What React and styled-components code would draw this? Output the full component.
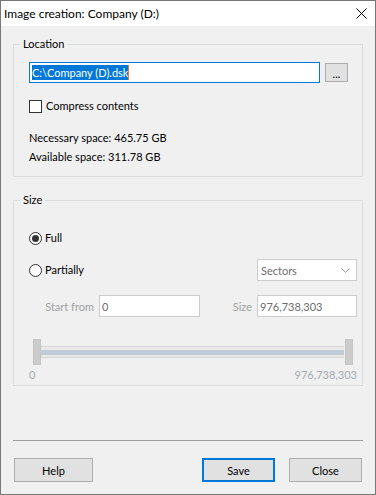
import React from 'react'
import styled, { createGlobalStyle } from 'styled-components'

const GlobalStyle = createGlobalStyle`
  html, body {
    margin: 0;
    padding: 0;
    background: #ffffff;
  }
  body {
    font-family: Lato, "Noto Sans", "Liberation Sans", sans-serif;
    font-size: 11px;
    color: #000000;
  }
  * {
    box-sizing: border-box;
  }
`

const Window = styled.div`
  width: 376px;
  height: 495px;
  border: 1px solid #777777;
  display: flex;
  flex-direction: column;
  background: #f0f0f0;
`

const TitleBar = styled.div`
  height: 25px;
  background: #ffffff;
  display: flex;
  align-items: center;
  justify-content: space-between;
  padding: 0 8px 0 3px;
`

const Title = styled.span`
  font-size: 12px;
  line-height: 16px;
`

const Body = styled.div`
  flex: 1;
  display: flex;
  flex-direction: column;
  padding: 0 12px 12px 12px;
`

const Group = styled.fieldset`
  margin: ${(p) => p.$top || 0}px 0 0 0;
  padding: 0 5px ${(p) => p.$bottom || 0}px 15px;
  min-width: 0;
  border: 1px solid #dcdcdc;
  border-radius: 0;
`

const Legend = styled.legend`
  margin-left: -9px;
  padding: 0 3px;
  line-height: 16px;
  font-size: 11px;
`

const PathRow = styled.div`
  display: flex;
  align-items: center;
  gap: 5px;
  margin-top: 10px;
`

const PathField = styled.div`
  width: 291px;
  height: 21px;
  border: 1px solid #0078d7;
  background: #ffffff;
  display: flex;
  align-items: center;
  padding-left: 2px;
`

const Selection = styled.span`
  background: #0078d7;
  color: #ffffff;
  line-height: 15px;
  border-right: 1px solid #f07820;
`

const SmallButton = styled.button`
  width: 23px;
  height: 19px;
  border: 1px solid #adadad;
  background: #e1e1e1;
  font-family: inherit;
  font-size: 11px;
  line-height: 12px;
  padding: 3px 0 0;
  color: #000000;
`

const CheckRow = styled.label`
  display: flex;
  align-items: center;
  gap: 4px;
  height: 16px;
  margin-top: 15px;
  line-height: 16px;
`

const Box = styled.span`
  width: 13px;
  height: 13px;
  border: 1px solid #333333;
  background: #ffffff;
`

const Info = styled.div`
  line-height: 19px;
  margin-top: ${(p) => p.$top || 0}px;
`

const RadioRow = styled.div`
  display: flex;
  align-items: center;
  justify-content: space-between;
  height: 22px;
  margin-top: ${(p) => p.$top || 0}px;
`

const Radio = styled.label`
  display: flex;
  align-items: center;
  gap: 3px;
  line-height: 16px;
  color: #000000;
`

const Circle = styled.span`
  width: 13px;
  height: 13px;
  border-radius: 50%;
  border: 1px solid #333333;
  background: #ffffff;
  display: flex;
  align-items: center;
  justify-content: center;

  &::after {
    content: '';
    width: 7px;
    height: 7px;
    border-radius: 50%;
    background: ${(p) => (p.$checked ? '#333333' : 'transparent')};
  }
`

const Select = styled.div`
  width: 100px;
  height: 22px;
  border: 1px solid #cccccc;
  background: #ffffff;
  color: #6d6d6d;
  display: flex;
  align-items: center;
  justify-content: space-between;
  padding: 0 6px 0 3px;
`

const RangeRow = styled.div`
  display: flex;
  align-items: center;
  justify-content: space-between;
  margin-top: 14px;
  height: 22px;
`

const Field = styled.div`
  display: flex;
  align-items: center;
  gap: 5px;
  padding-left: ${(p) => p.$indent || 0}px;
`

const FieldLabel = styled.span`
  color: #a0a0a0;
  white-space: nowrap;
  display: flex;
  justify-content: flex-end;
  flex-shrink: 0;
  width: ${(p) => (p.$w ? `${p.$w}px` : 'auto')};
`

const TextBox = styled.div`
  width: ${(p) => p.$w}px;
  height: 22px;
  border: 1px solid #cccccc;
  background: #ffffff;
  color: #6d6d6d;
  display: flex;
  align-items: center;
  padding-left: 2px;
`

const Slider = styled.div`
  display: flex;
  align-items: flex-start;
  margin: 22px 4px 0 4px;
  height: 26px;
`

const Thumb = styled.span`
  width: 8px;
  height: 26px;
  background: #cccccc;
  border: 1px solid #c4c4c4;
  flex-shrink: 0;
`

const Track = styled.div`
  flex: 1;
  height: 12px;
  margin: 7px 1px 0 0;
  border-top: 1px solid #d6d6d6;
  border-bottom: 1px solid #d6d6d6;
  background: #e9e9e9;
  padding-top: 3px;
`

const Band = styled.div`
  height: 5px;
  background: #c2ccd8;
`

const Scale = styled.div`
  display: flex;
  justify-content: space-between;
  color: #a5aab0;
  line-height: 16px;
  margin-top: 2px;
`

const Footer = styled.div`
  margin-top: auto;
`

const Separator = styled.div`
  height: 1px;
  background: #a0a0a0;
`

const Buttons = styled.div`
  display: flex;
  align-items: center;
  margin-top: 17px;
  padding-left: 1px;
`

const Button = styled.button`
  width: ${(p) => p.$w}px;
  height: 24px;
  margin-left: ${(p) => p.$gap || 0}px;
  border: ${(p) => (p.$default ? '2px solid #0078d7' : '1px solid #adadad')};
  background: #e1e1e1;
  font-family: inherit;
  font-size: 11px;
  color: #000000;
  padding: 0;
`

const CloseIcon = () => (
  <svg width="11" height="11" viewBox="0 0 11 11">
    <path d="M0.5 0.5 L10.5 10.5 M10.5 0.5 L0.5 10.5" stroke="#000" strokeWidth="1" fill="none" />
  </svg>
)

const Chevron = () => (
  <svg width="9" height="5" viewBox="0 0 9 5">
    <path d="M0.5 0.5 L4.5 4.5 L8.5 0.5" stroke="#9a9a9a" strokeWidth="1" fill="none" />
  </svg>
)

export default function App() {
  return (
    <>
      <GlobalStyle />
      <Window>
        <TitleBar>
          <Title>Image creation: Company (D:)</Title>
          <CloseIcon />
        </TitleBar>
        <Body>
          <Group $top={10} $bottom={10}>
            <Legend>Location</Legend>
            <PathRow>
              <PathField>
                <Selection>C:\Company (D).dsk</Selection>
              </PathField>
              <SmallButton>...</SmallButton>
            </PathRow>
            <CheckRow>
              <Box />
              Compress contents
            </CheckRow>
            <Info $top={14}>Necessary space: 465.75 GB</Info>
            <Info>Available space: 311.78 GB</Info>
          </Group>

          <Group $top={15} $bottom={2}>
            <Legend>Size</Legend>
            <RadioRow $top={19}>
              <Radio>
                <Circle $checked />
                Full
              </Radio>
            </RadioRow>
            <RadioRow $top={10}>
              <Radio>
                <Circle />
                Partially
              </Radio>
              <Select>
                Sectors
                <Chevron />
              </Select>
            </RadioRow>
            <RangeRow>
              <Field $indent={16}>
                <FieldLabel $w={49}>Start from</FieldLabel>
                <TextBox $w={101}>0</TextBox>
              </Field>
              <Field>
                <FieldLabel>Size</FieldLabel>
                <TextBox $w={100}>976,738,303</TextBox>
              </Field>
            </RangeRow>
            <Slider>
              <Thumb />
              <Track>
                <Band />
              </Track>
              <Thumb />
            </Slider>
            <Scale>
              <span>0</span>
              <span>976,738,303</span>
            </Scale>
          </Group>

          <Footer>
            <Separator />
            <Buttons>
              <Button $w={79}>Help</Button>
              <Button $w={73} $gap={109} $default>Save</Button>
              <Button $w={73} $gap={14}>Close</Button>
            </Buttons>
          </Footer>
        </Body>
      </Window>
    </>
  )
}
